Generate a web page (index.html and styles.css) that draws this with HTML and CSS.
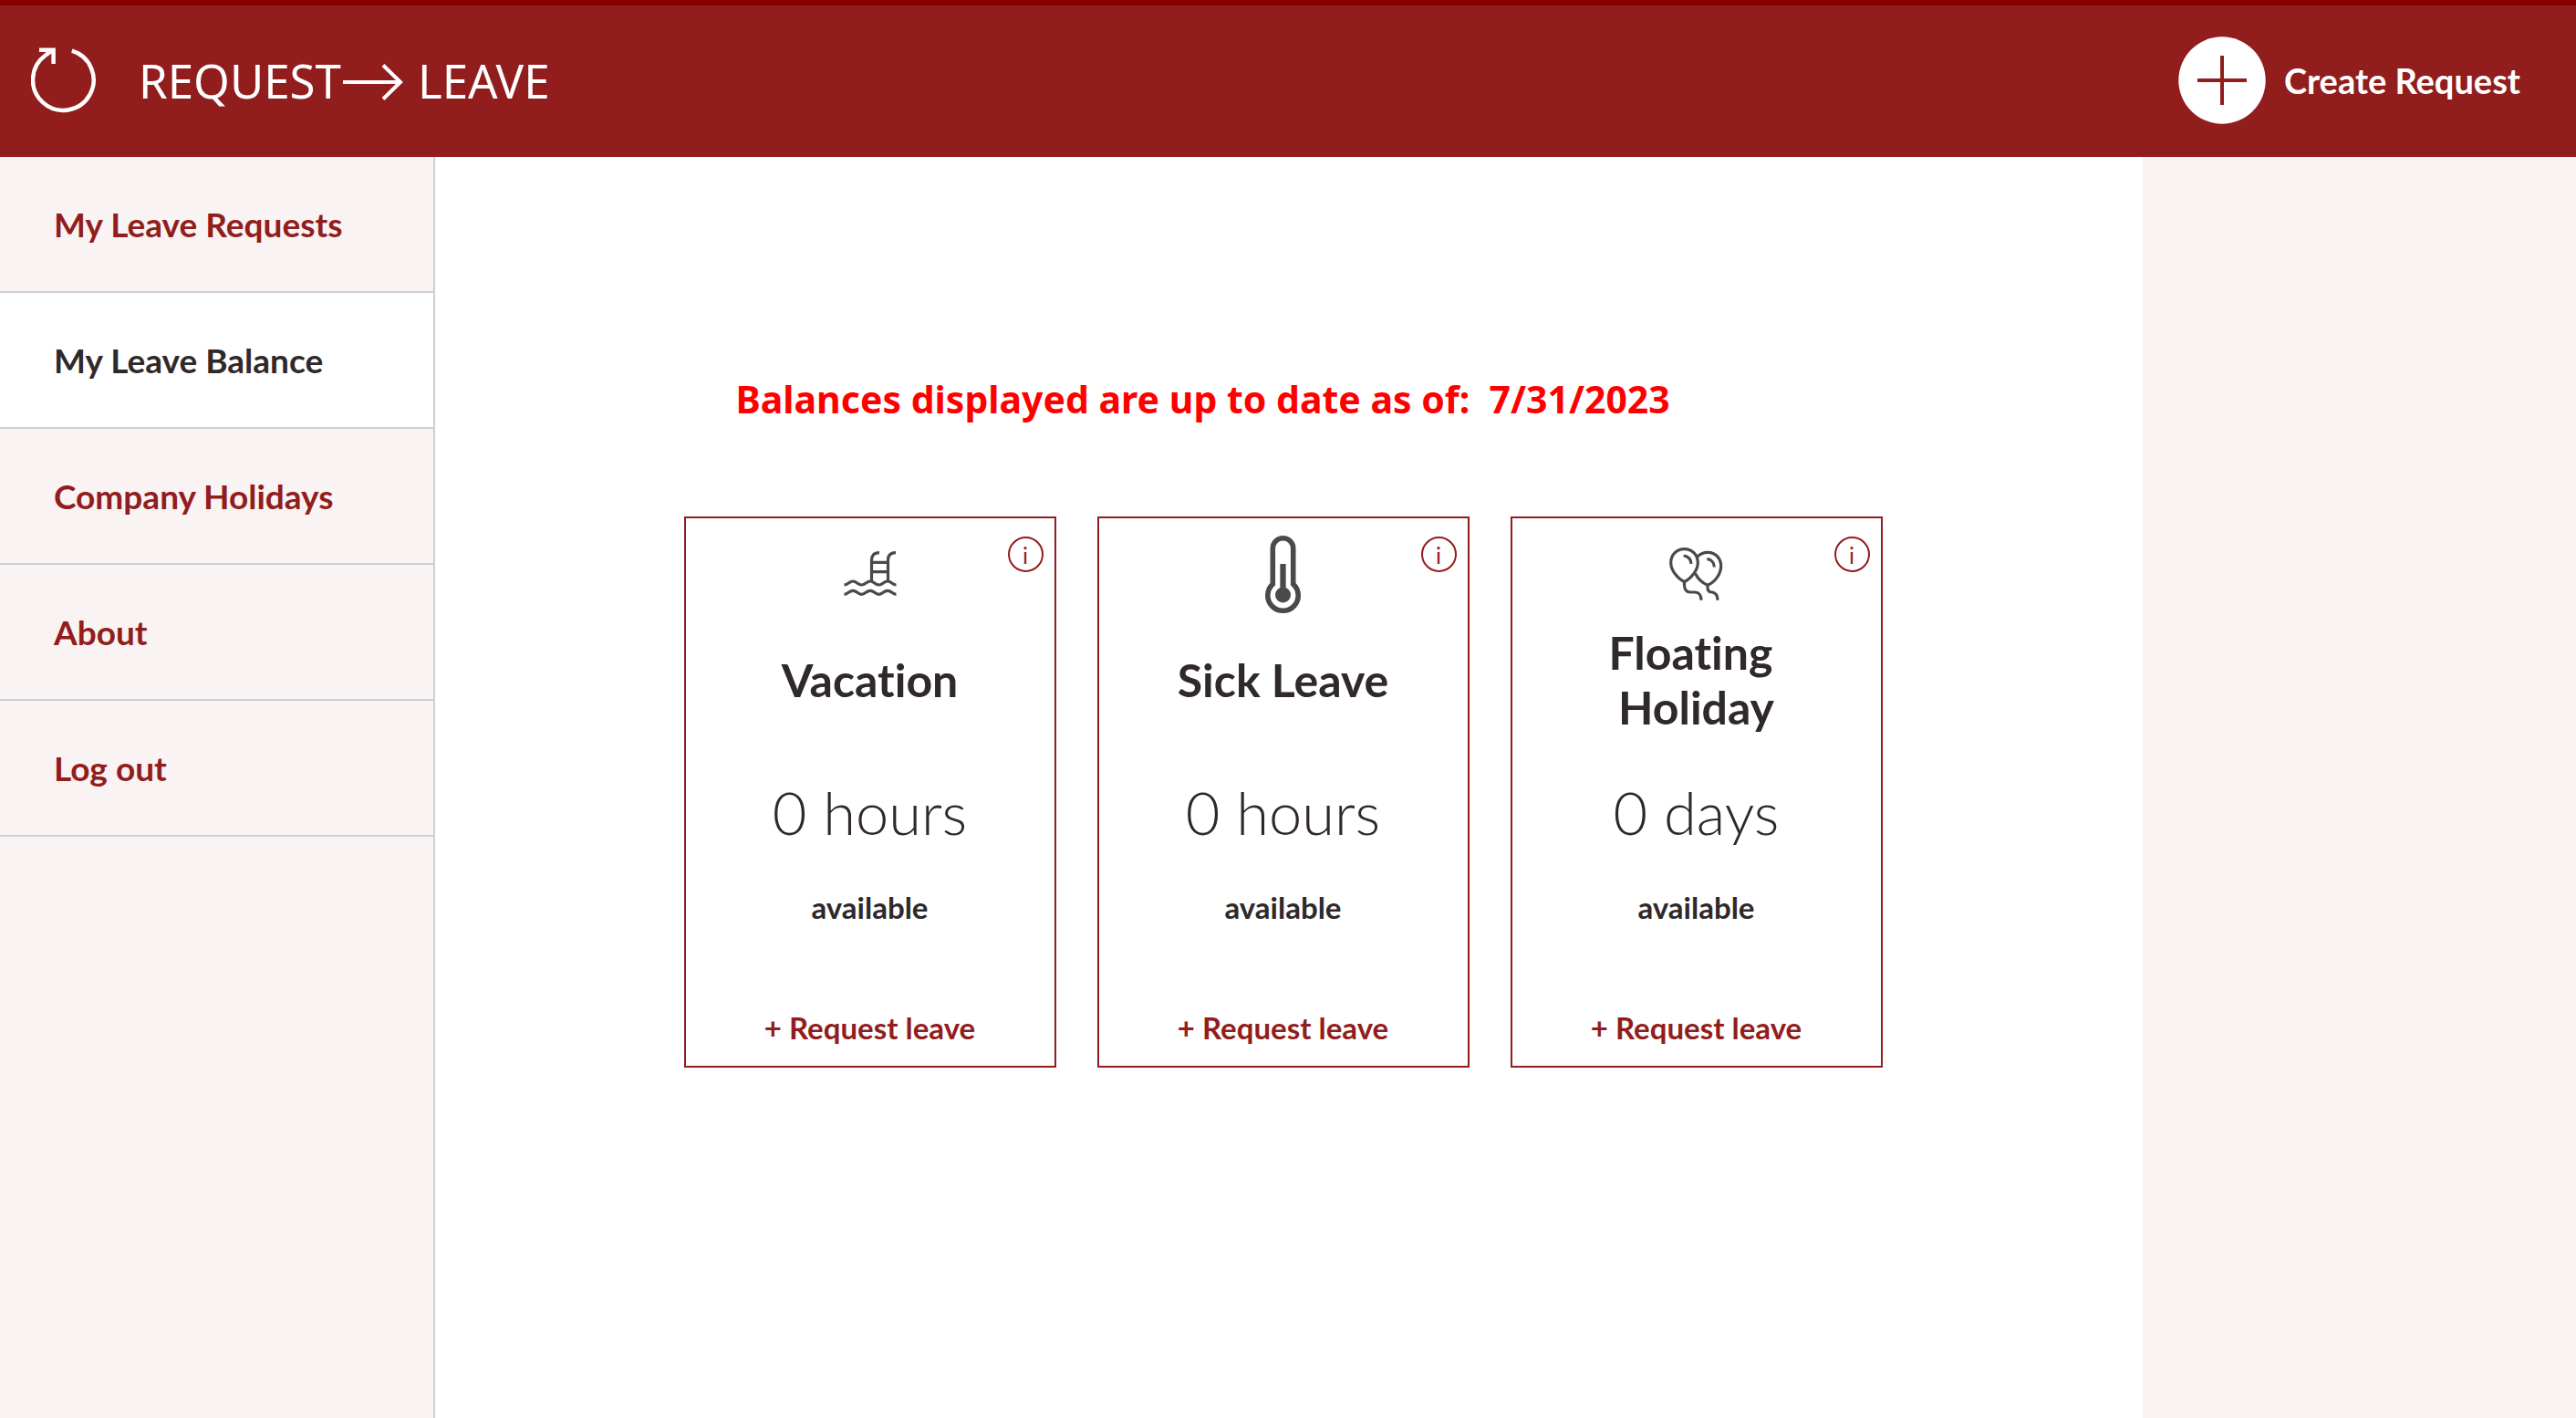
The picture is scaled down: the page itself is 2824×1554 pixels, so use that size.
FILE: index.html
```html
<!DOCTYPE html>
<html lang="en">
<head>
<meta charset="utf-8">
<meta name="viewport" content="width=device-width, initial-scale=1">
<title>Request Leave</title>
<link rel="stylesheet" href="styles.css">
</head>
<body>
<header class="topbar">
  <button class="refresh" type="button" aria-label="Refresh">
    <svg width="72" height="72" viewBox="0 0 72 72" fill="none" stroke="currentColor" stroke-width="4.5" aria-hidden="true">
      <path d="M44.8 3.7A33.3 33.3 0 1 1 16 8.5Q19 6 24 3"/>
      <path d="M9 2.7H24.6V18"/>
    </svg>
  </button>
  <h1 class="brand">
    <span>REQUEST</span>
    <svg class="brand-arrow" width="66" height="40" viewBox="0 0 66 40" fill="none" stroke="currentColor" stroke-width="4" aria-hidden="true">
      <path d="M0 20H63M44 1.5L63 20L44 38.5"/>
    </svg>
    <span>LEAVE</span>
  </h1>
  <button class="create" type="button">
    <svg width="96" height="96" viewBox="0 0 96 96" aria-hidden="true">
      <circle cx="48" cy="48" r="47.7" fill="#fff"/>
      <path d="M21 48H75M48 21V75" stroke="#921d1d" stroke-width="4"/>
    </svg>
    <span>Create Request</span>
  </button>
</header>
<div class="layout">
  <nav class="sidebar">
    <a class="nav-item" href="#requests">My Leave Requests</a>
    <a class="nav-item active" href="#balance" aria-current="page">My Leave Balance</a>
    <a class="nav-item" href="#holidays">Company Holidays</a>
    <a class="nav-item" href="#about">About</a>
    <a class="nav-item" href="#logout">Log out</a>
  </nav>
  <main class="content">
    <div class="balances">
      <p class="as-of">Balances displayed are up to date as of:&nbsp; 7/31/2023</p>
      <div class="cards">
        <section class="card">
          <button class="info" type="button" aria-label="About vacation">i</button>
          <svg class="card-icon" width="58" height="90" viewBox="0 -20 57 90" fill="none" stroke="#4a4a4a" stroke-width="3.2" aria-hidden="true">
            <path d="M38.5 1.7C32.500 1.700 30 4.500 30 10V33M56.500 1.700C50.500 1.700 48 4.500 48 10V33M30 12.300H48M30 22.700H48"/>
            <path d="M0 37C4.500 37 5 33 9.500 33S14.500 37 19 37S24 33 28.500 33S33.500 37 38 37S43 33 47.500 33S52.500 37 57 37"/>
            <path d="M0 47.300C4.500 47.300 5 43.300 9.500 43.300S14.500 47.300 19 47.300S24 43.300 28.500 43.300S33.500 47.300 38 47.300S43 43.300 47.500 43.300S52.500 47.300 57 47.300"/>
          </svg>
          <h2 class="card-title">Vacation</h2>
          <p class="amount">0 hours</p>
          <p class="available">available</p>
          <a class="request" href="#new-vacation">+ Request leave</a>
        </section>
        <section class="card">
          <button class="info" type="button" aria-label="About sick leave">i</button>
          <svg class="card-icon" width="39" height="90" viewBox="0 -3 39 90" fill="none" stroke="#4a4a4a" aria-hidden="true">
            <path stroke-width="5.600" d="M8.300 53.200V14A11.200 11.200 0 0 1 30.700 14V53.200A16.700 16.700 0 1 1 8.300 53.200Z"/>
            <path stroke-width="6.300" d="M19.500 31V62"/>
            <circle cx="19.500" cy="65" r="8.500" fill="#4a4a4a" stroke="none"/>
          </svg>
          <h2 class="card-title">Sick Leave</h2>
          <p class="amount">0 hours</p>
          <p class="available">available</p>
          <a class="request" href="#new-sick">+ Request leave</a>
        </section>
        <section class="card">
          <button class="info" type="button" aria-label="About floating holiday">i</button>
          <svg class="card-icon" width="59" height="90" viewBox="0 -16 59 90" fill="none" stroke="#4a4a4a" stroke-width="3.200" aria-hidden="true">
            <path d="M16.500 37.700C9 34 1.700 25 1.700 16.700C1.700 8 8 1.600 16.500 1.600S31.300 8 31.300 16.700C31.300 25 24 34 16.500 37.700Z"/>
            <path d="M30.500 10.500C33.500 7 37.500 5.300 42.300 5.300C50.500 5.300 56.700 12 56.700 20.500C56.700 29 50 38 42 41.300C36.500 39 31.500 34.500 28.500 28.500"/>
            <path d="M15.700 9C20.500 9.500 23.500 12.500 24 17.800M41.300 12.700C45.500 13 49 16 49.300 21.500"/>
            <path d="M16.500 38V41C16.500 46 19 49 23 49H28C32.500 49 35 52.500 35 57.700M42 41.500V43.500C42 47 44 49 47 49C50.500 49.500 52.800 52.500 53 57.700"/>
          </svg>
          <h2 class="card-title">Floating&nbsp;<br>Holiday</h2>
          <p class="amount">0 days</p>
          <p class="available">available</p>
          <a class="request" href="#new-floating">+ Request leave</a>
        </section>
      </div>
    </div>
  </main>
</div>
</body>
</html>
```
FILE: styles.css
```css
:root {
  --brand: #921d1d;
  --brand-dark: #860000;
  --panel: #f9f3f3;
  --line: #cfcfcf;
  --text: #2f292b;
}

* {
  box-sizing: border-box;
}

body {
  margin: 0;
  min-height: 100vh;
  display: flex;
  flex-direction: column;
  background: var(--panel);
  color: var(--text);
  font-family: Lato, "Liberation Sans", sans-serif;
  font-variant-ligatures: none;
}

h1, h2, p {
  margin: 0;
}

button {
  padding: 0;
  border: 0;
  background: none;
  color: inherit;
  font: inherit;
  cursor: pointer;
}

a {
  text-decoration: none;
}

svg {
  display: block;
}

.topbar {
  display: flex;
  align-items: center;
  min-height: 172px;
  padding: 0 61px 2px 34px;
  border-top: 6px solid var(--brand-dark);
  background: var(--brand);
  color: #fff;
}

.brand {
  display: flex;
  align-items: center;
  margin-left: 46px;
  font: 400 51px/68px "Noto Sans", "Open Sans", sans-serif;
}

.brand-arrow {
  margin: 4px 16px 0 2px;
}

.create {
  display: flex;
  align-items: center;
  gap: 20px;
  margin-left: auto;
  font-size: 38px;
  font-weight: 700;
}

.layout {
  flex: 1;
  display: grid;
  grid-template-columns: 477px 1fr 475px;
}

.sidebar {
  border-right: 2px solid var(--line);
}

.nav-item {
  display: block;
  padding: 52px 59px 51px;
  border-bottom: 2px solid var(--line);
  color: var(--brand);
  font-size: 37px;
  font-weight: 700;
  line-height: 44px;
}

.nav-item.active {
  background: #fff;
  color: var(--text);
}

.content {
  display: flex;
  justify-content: center;
  align-items: flex-start;
  padding: 238px 13px 60px 0;
  background: #fff;
}

.as-of {
  padding-left: 57px;
  color: #f00;
  font: 700 41px/54px "Noto Sans", "Open Sans", sans-serif;
}

.cards {
  display: flex;
  gap: 45px;
  margin-top: 102px;
}

.card {
  position: relative;
  display: flex;
  flex-direction: column;
  align-items: center;
  width: 408px;
  padding: 16px 20px 22px;
  border: 2px solid var(--brand);
  text-align: center;
}

.info {
  position: absolute;
  top: 20px;
  right: 12px;
  width: 39px;
  height: 39px;
  border: 2px solid var(--brand);
  border-radius: 50%;
  color: var(--brand);
  font-size: 25px;
  line-height: 34px;
}

.card-title {
  display: flex;
  align-items: center;
  min-height: 120px;
  margin-top: 11px;
  font-size: 50px;
  font-weight: 700;
  line-height: 60px;
}

.amount {
  margin-top: 45px;
  font-size: 65px;
  font-weight: 300;
  line-height: 80px;
}

.available,
.request {
  font-size: 33px;
  font-weight: 700;
  line-height: 40px;
}

.available {
  margin-top: 44px;
}

.request {
  margin-top: 92px;
  color: var(--brand);
}
```
